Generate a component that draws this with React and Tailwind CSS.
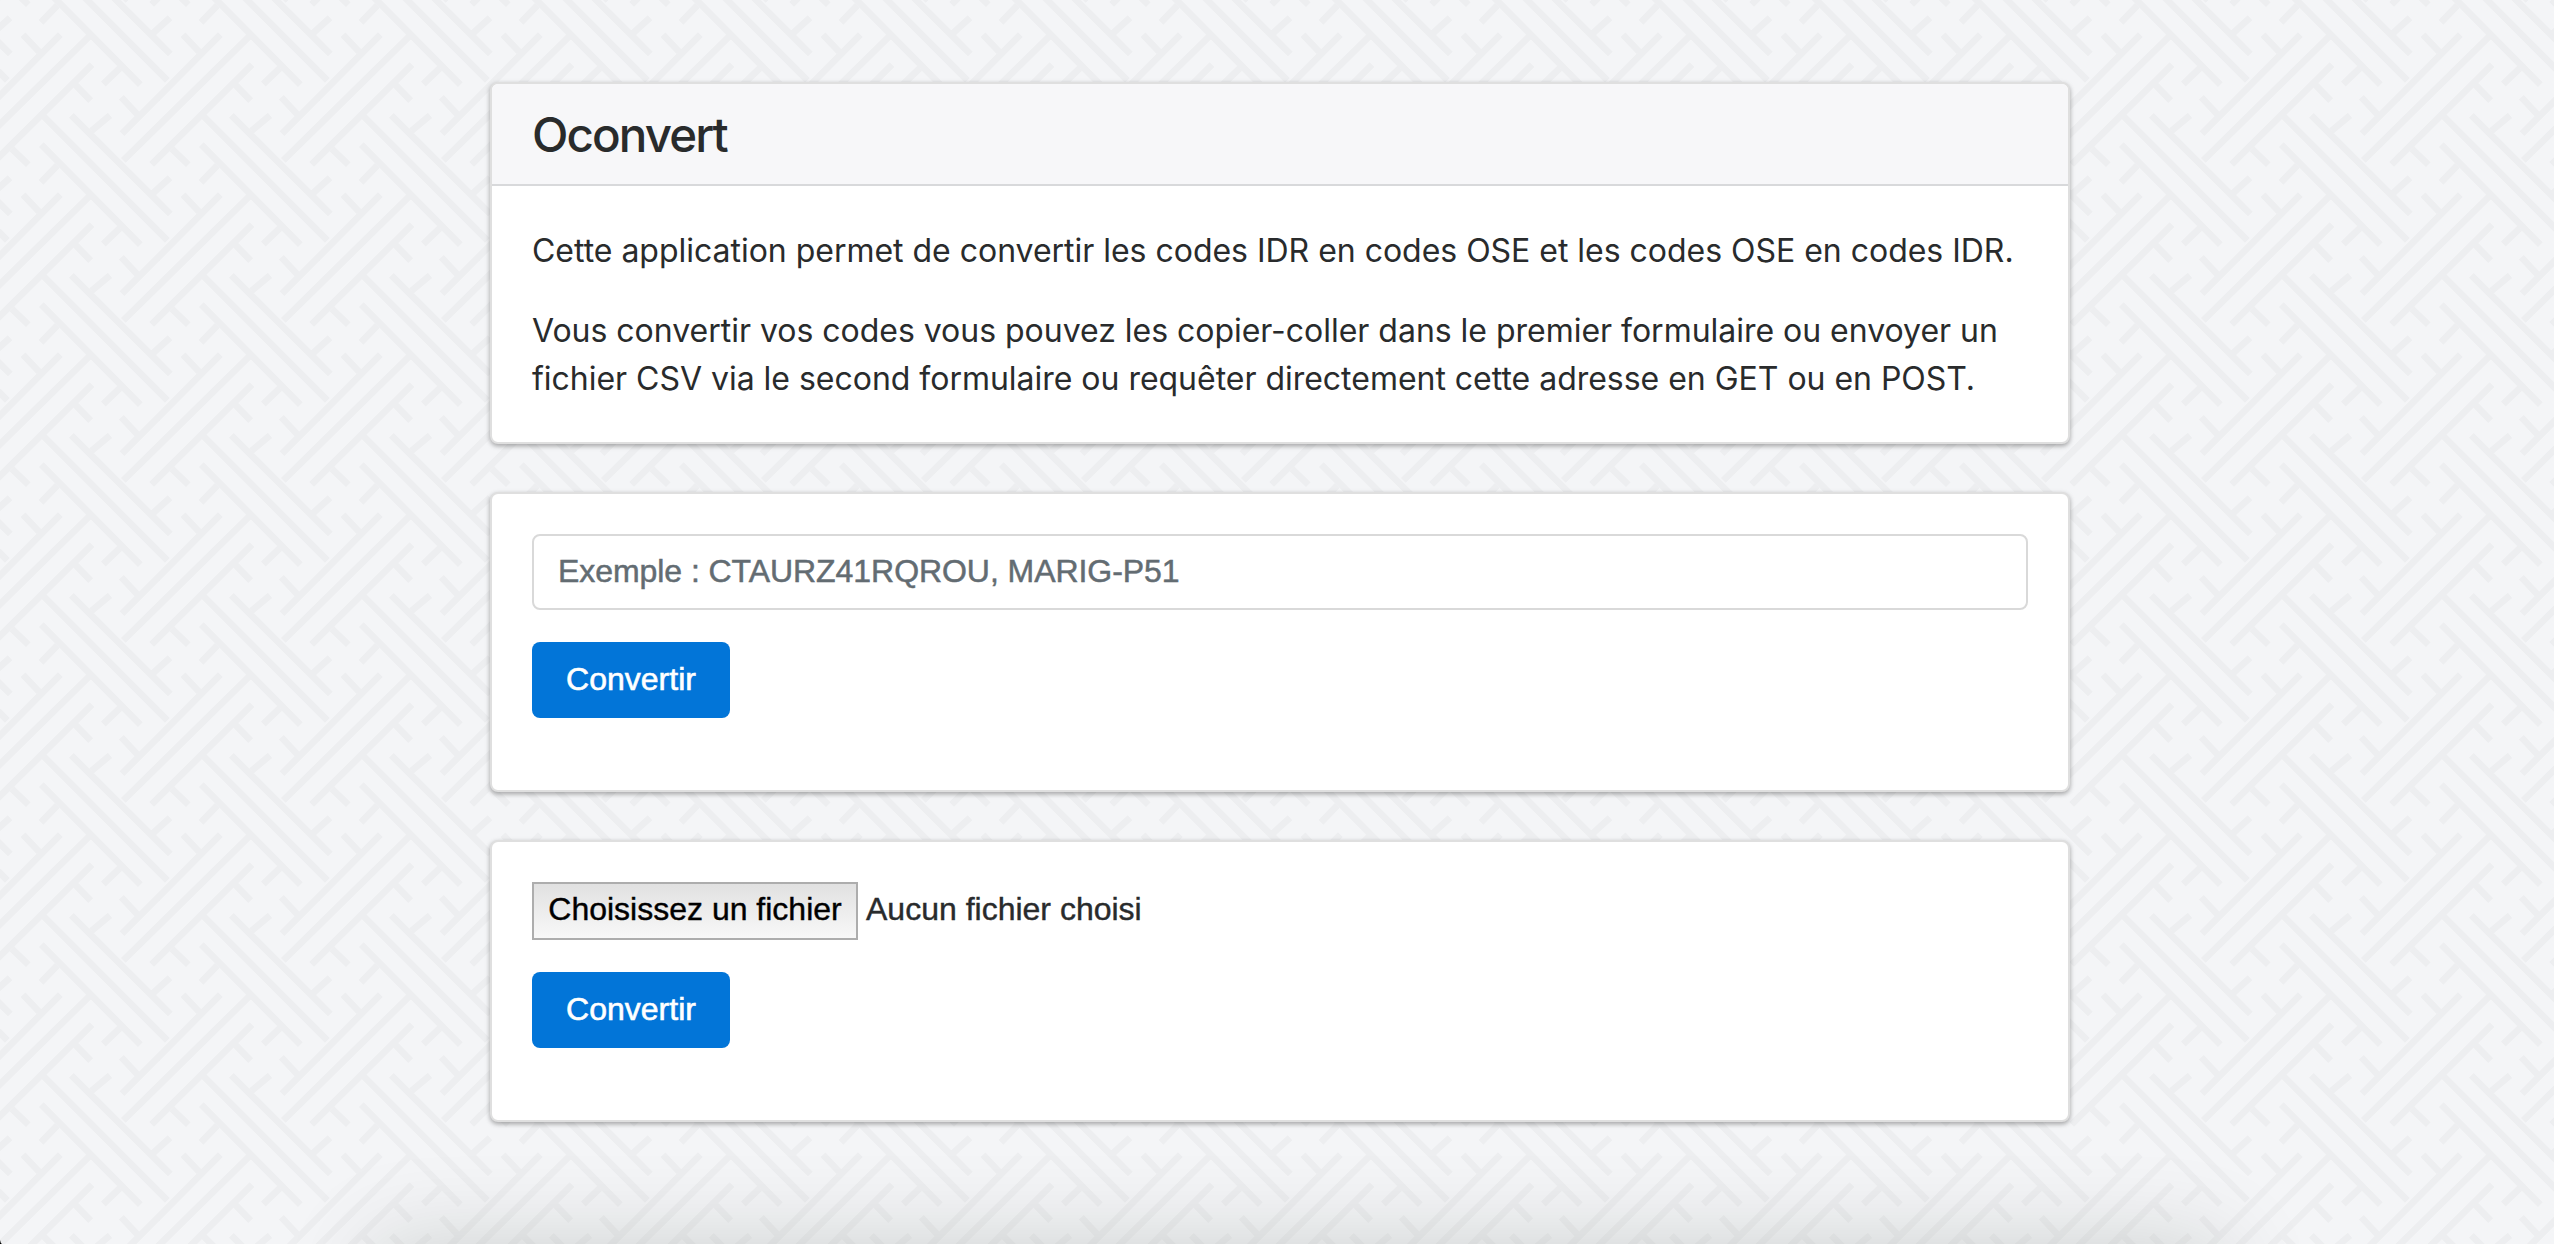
import React from "react";

// Strokes of one 480-unit tile of the woven background, as [x1, y1, x2, y2].
const STROKES = [
  [124, -46, 421, 254],
  [127, -135, 502, 241],
  [214, 346, 511, 642],
  [661, 104, 366, 401],
  [750, 107, 370, 481],
  [756, 194, 455, 493],
  [69, 104, 118, 156],
  [123, 67, 172, 16],
  [454, 104, 510, 53],
  [222, 250, 272, 302],
  [310, 252, 360, 204],
  [364, 292, 413, 344],
  [274, 393, 330, 346],
  [515, 446, 565, 494],
];

const OFFSETS = [-960, -480, 0, 480].flatMap((x) => [-960, -480, 0, 480].map((y) => [x, y]));

function WovenBackground() {
  return (
    <svg className="absolute inset-0 -z-20 h-full w-full" aria-hidden="true">
      <defs>
        <g id="strokes" stroke="#edeef0" strokeWidth="20" strokeLinecap="butt">
          {STROKES.map(([x1, y1, x2, y2], i) => (
            <line key={i} x1={x1} y1={y1} x2={x2} y2={y2} />
          ))}
        </g>
        <pattern id="weave" width="160" height="160" patternUnits="userSpaceOnUse" viewBox="0 0 480 480">
          {OFFSETS.map(([x, y]) => (
            <use key={`${x}:${y}`} href="#strokes" x={x} y={y} />
          ))}
        </pattern>
      </defs>
      <rect width="100%" height="100%" fill="#f4f5f7" />
      <rect width="100%" height="100%" fill="url(#weave)" />
    </svg>
  );
}

function Card({ title, children }) {
  return (
    <section className="overflow-hidden rounded-lg border-2 border-[#dfdfdf] bg-white shadow-[0_2px_6px_rgba(0,0,0,0.12),0_2px_4px_rgba(0,0,0,0.24)]">
      {title && (
        <header className="border-b-2 border-[#d8d9db] bg-[#f7f7f9] px-10 py-6">
          <h1 className="h-[52px] text-[47.5px] leading-[54.8px] font-medium tracking-[-1.9px]">{title}</h1>
        </header>
      )}
      <div className="p-10">{children}</div>
    </section>
  );
}

function SubmitButton() {
  return (
    <button
      type="submit"
      className="mb-8 flex h-[76px] w-[198px] items-center justify-center rounded-lg bg-[#0275d8] pb-0.5 font-['Liberation_Sans',sans-serif] text-[32px] text-white [-webkit-text-stroke:0.6px_white]"
    >
      Convertir
    </button>
  );
}

export default function App() {
  return (
    <div className="relative isolate h-screen overflow-hidden font-['Inter',sans-serif] text-[32px] leading-[48px] text-[#292b2c]">
      <WovenBackground />
      <div className="absolute top-full right-[330px] left-[372px] -z-10 h-40 shadow-[0_0_94px_rgba(15,25,5,0.16)]" />

      <main className="ml-[490px] flex w-[1580px] flex-col gap-12 pt-[82px]">
        <Card title="Oconvert">
          <div className="-mb-px pt-px tracking-[-0.02px] whitespace-nowrap">
            <p className="mb-8">
              Cette application permet de convertir les codes IDR en codes OSE et les codes OSE en codes IDR.
            </p>
            <p>
              Vous convertir vos codes vous pouvez les copier-coller dans le premier formulaire ou envoyer un
              <br />
              fichier CSV via le second formulaire ou requêter directement cette adresse en GET ou en POST.
            </p>
          </div>
        </Card>

        <Card>
          <input
            type="text"
            placeholder="Exemple : CTAURZ41RQROU, MARIG-P51"
            className="mb-8 block h-[76px] w-full rounded-lg border-2 border-[#d9d9d9] bg-white px-6 pb-0.5 font-['Liberation_Sans',sans-serif] text-[32px] tracking-[-0.06px] placeholder:text-[#636c72] placeholder:[-webkit-text-stroke:0.5px_#636c72]"
          />
          <SubmitButton />
        </Card>

        <Card>
          <div className="mb-8 flex h-[58px] items-center gap-2 font-['Liberation_Sans',sans-serif] text-[32px]">
            <button
              type="button"
              className="flex h-[58px] w-[326px] items-center justify-center border-2 border-[#adadad] bg-linear-to-b from-[#e1e1e1] to-[#f8f8f8] pb-1 whitespace-nowrap text-black [-webkit-text-stroke:0.4px_black]"
            >
              Choisissez un fichier
            </button>
            <span className="pb-1 [-webkit-text-stroke:0.4px_#292b2c]">Aucun fichier choisi</span>
          </div>
          <SubmitButton />
        </Card>
      </main>

      <svg className="absolute bottom-0 left-0 h-1 w-0.5" viewBox="0 0 2 4" aria-hidden="true">
        <path d="M0 0Q.4 3 2 4H0Z" fill="#000" />
      </svg>
    </div>
  );
}
